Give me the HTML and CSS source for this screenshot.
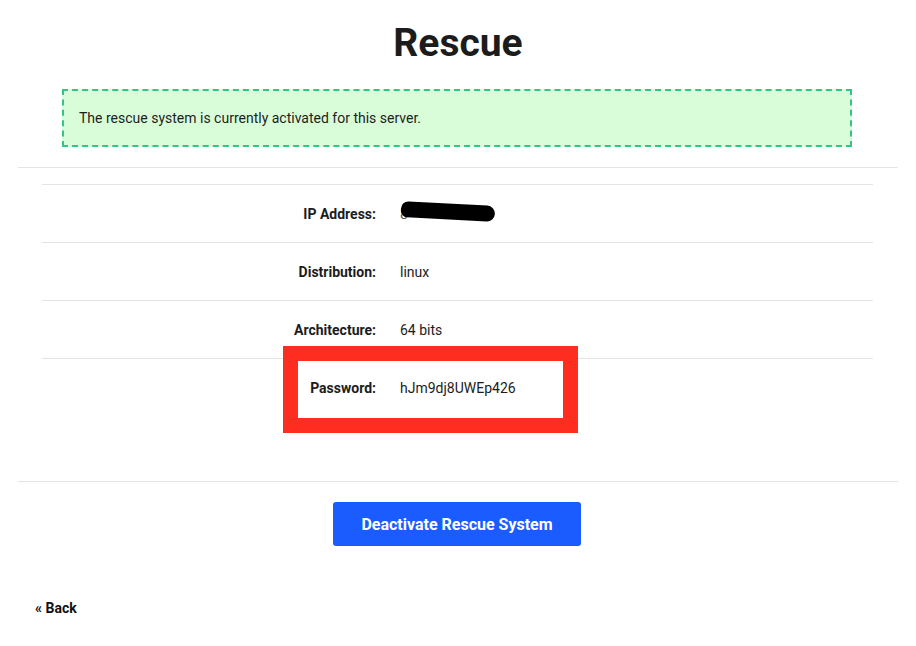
FILE: index.html
```html
<!DOCTYPE html>
<html>
<head>
<meta charset="utf-8">
<link rel="stylesheet" href="styles.css">
</head>
<body>
<div class="page">
  <h1 class="title">Rescue</h1>
  <div class="alert">The rescue system is currently activated for this server.</div>
  <hr class="sep">
  <div class="details">
    <div class="row">
      <div class="label">IP Address:</div>
      <div class="value"><span class="ip">8<span class="redact"></span></span></div>
    </div>
    <div class="row">
      <div class="label">Distribution:</div>
      <div class="value">linux</div>
    </div>
    <div class="row">
      <div class="label">Architecture:</div>
      <div class="value">64 bits</div>
    </div>
    <div class="row row-last">
      <div class="label">Password:</div>
      <div class="value">hJm9dj8UWEp426</div>
      <div class="highlight"></div>
    </div>
  </div>
  <hr class="sep sep-bottom">
  <div class="actions">
    <button class="btn">Deactivate Rescue System</button>
  </div>
  <a class="back" href="#">« Back</a>
</div>
</body>
</html>
```
FILE: styles.css
```css
html, body {
  margin: 0;
  padding: 0;
  background: #fff;
}
body {
  font-family: Roboto, "Liberation Sans", sans-serif;
  color: #1a1a1a;
}
.page {
  padding: 0 18px;
}
.title {
  margin: 0;
  padding-top: 20px;
  height: 89px;
  box-sizing: border-box;
  text-align: center;
  font-size: 39px;
  font-weight: 700;
  line-height: 46px;
  color: #1c1c1c;
}
.alert {
  margin: 0 46px 0 44px;
  height: 58px;
  box-sizing: border-box;
  border: 2px dashed #33c48a;
  background: #d9fdd9;
  padding: 0 15px;
  display: flex;
  align-items: center;
  font-size: 14px;
  color: #1e1e1e;
}
.sep {
  margin: 20px 0 0;
  border: 0;
  border-top: 1px solid #e4e4e4;
  height: 0;
}
.details {
  margin: 16px 25px 0 24px;
}
.row {
  position: relative;
  display: grid;
  grid-template-columns: 334px 1fr;
  column-gap: 24px;
  align-items: center;
  height: 58px;
  box-sizing: border-box;
  border-top: 1px solid #e4e4e4;
  font-size: 14px;
}
.label {
  text-align: right;
  font-weight: 700;
  color: #1c1c1c;
}
.value {
  color: #1c1c1c;
}
.ip {
  position: relative;
  display: inline-block;
  color: #555;
}
.redact {
  position: absolute;
  left: 1px;
  top: -5px;
  width: 94px;
  height: 16px;
  background: #000;
  border-radius: 9px 10px 10px 8px;
  transform: rotate(3deg);
  transform-origin: left center;
}
.highlight {
  position: absolute;
  left: 241px;
  top: -13px;
  width: 265px;
  height: 57px;
  border: 15px solid #ff2d20;
}
.sep-bottom {
  margin-top: 65px;
}
.actions {
  display: flex;
  justify-content: center;
  margin-top: 20px;
  padding-right: 2px;
}
.btn {
  width: 248px;
  height: 44px;
  background: #1a5cff;
  color: #fff;
  border: 0;
  border-radius: 3px;
  font-family: Roboto, "Liberation Sans", sans-serif;
  font-weight: 700;
  font-size: 16px;
}
.back {
  display: inline-block;
  margin-top: 54px;
  margin-left: 17px;
  font-size: 14px;
  font-weight: 700;
  color: #111;
  text-decoration: none;
}
```
